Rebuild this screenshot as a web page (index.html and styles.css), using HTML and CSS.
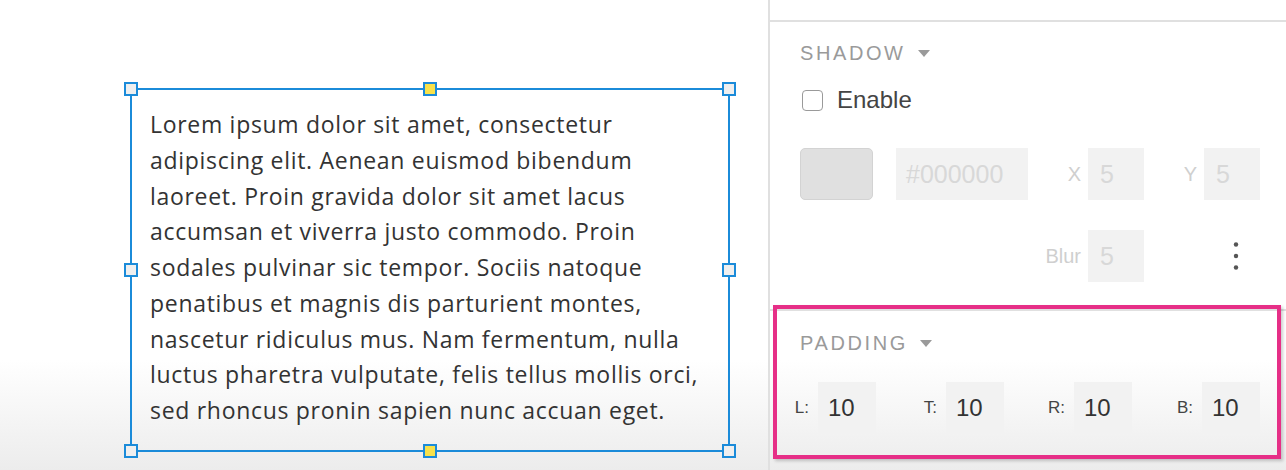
FILE: index.html
```html
<!DOCTYPE html>
<html lang="en">

<head>
    <meta charset="UTF-8">
    <meta name="viewport" content="width=device-width, initial-scale=1.0">
    <title>Text Block Editor</title>
    <link rel="stylesheet" href="styles.css">
</head>

<body>

    <!-- Canvas with the selected text block -->
    <div class="canvas">
        <div class="text-block">
            <p class="text-body">
                Lorem ipsum dolor sit amet, consectetur<br>
                adipiscing elit. Aenean euismod bibendum<br>
                laoreet. Proin gravida dolor sit amet lacus<br>
                accumsan et viverra justo commodo. Proin<br>
                sodales pulvinar sic tempor. Sociis natoque<br>
                penatibus et magnis dis parturient montes,<br>
                nascetur ridiculus mus. Nam fermentum, nulla<br>
                luctus pharetra vulputate, felis tellus mollis orci,<br>
                sed rhoncus pronin sapien nunc accuan eget.
            </p>

            <span class="handle top-left"></span>
            <span class="handle top-mid anchor"></span>
            <span class="handle top-right"></span>
            <span class="handle mid-left"></span>
            <span class="handle mid-right"></span>
            <span class="handle bottom-left"></span>
            <span class="handle bottom-mid anchor"></span>
            <span class="handle bottom-right"></span>
        </div>
    </div>

    <!-- Properties panel -->
    <aside class="panel">
        <div class="panel-top"></div>

        <section class="section shadow-section">
            <div class="section-title">SHADOW <span class="caret"></span></div>

            <label class="enable-row">
                <span class="checkbox"></span>
                Enable
            </label>

            <div class="shadow-grid">
                <div class="swatch"></div>
                <div class="field hex-field">#000000</div>
                <div class="field-group">
                    <span class="field-label">X</span>
                    <div class="field small-field">5</div>
                </div>
                <div class="field-group">
                    <span class="field-label">Y</span>
                    <div class="field small-field">5</div>
                </div>

                <div class="field-group blur-group">
                    <span class="field-label">Blur</span>
                    <div class="field small-field">5</div>
                </div>
                <div class="more-btn">
                    <svg width="6" height="30" viewBox="0 0 6 30">
                        <circle cx="3" cy="3.5" r="2.2" fill="#555" />
                        <circle cx="3" cy="15" r="2.2" fill="#555" />
                        <circle cx="3" cy="26.5" r="2.2" fill="#555" />
                    </svg>
                </div>
            </div>
        </section>

        <section class="section padding-section">
            <div class="highlight"></div>
            <div class="section-title">PADDING <span class="caret"></span></div>

            <div class="padding-row">
                <div class="pad-group">
                    <span class="pad-label">L:</span>
                    <div class="field pad-field">10</div>
                </div>
                <div class="pad-group">
                    <span class="pad-label">T:</span>
                    <div class="field pad-field">10</div>
                </div>
                <div class="pad-group">
                    <span class="pad-label">R:</span>
                    <div class="field pad-field">10</div>
                </div>
                <div class="pad-group">
                    <span class="pad-label">B:</span>
                    <div class="field pad-field">10</div>
                </div>
            </div>
        </section>
    </aside>

</body>

</html>
```

FILE: styles.css
```css
* {
    margin: 0;
    padding: 0;
    box-sizing: border-box;
}

body {
    font-family: 'Liberation Sans', Arial, sans-serif;
    height: 470px;
    overflow: hidden;
    display: flex;
    background: linear-gradient(to bottom, #fff 0, #fff 360px, #ececec 470px);
}

/* ---------- canvas ---------- */

.canvas {
    width: 768px;
    padding: 88px 0 0 130px;
}

.text-block {
    position: relative;
    width: 600px;
    height: 364px;
    border: 2px solid #1b8bd9;
    padding: 17px 18px 0 18px;
}

.text-body {
    font-family: 'Open Sans', 'Noto Sans', sans-serif;
    font-size: 23px;
    letter-spacing: 0.7px;
    line-height: 35.75px;
    color: #333;
    white-space: nowrap;
}

.handle {
    position: absolute;
    width: 14px;
    height: 14px;
    border: 2px solid #1b8bd9;
    background: #efefef;
}

.handle.anchor {
    background: #f7e14a;
}

.top-left { top: -8px; left: -8px; }
.top-mid { top: -8px; left: 291px; }
.top-right { top: -8px; right: -8px; }
.mid-left { top: 173px; left: -8px; }
.mid-right { top: 173px; right: -8px; }
.bottom-left { bottom: -8px; left: -8px; }
.bottom-mid { bottom: -8px; left: 291px; }
.bottom-right { bottom: -8px; right: -8px; }

/* ---------- panel ---------- */

.panel {
    width: 518px;
    border-left: 2px solid #e0e0e0;
}

.panel-top {
    height: 22px;
    border-bottom: 2px solid #e0e0e0;
}

.section {
    position: relative;
    padding: 0 26px 0 30px;
}

.section-title {
    display: flex;
    align-items: center;
    height: 24px;
    font-size: 20px;
    letter-spacing: 2.6px;
    color: #9a9a9a;
}

.caret {
    width: 0;
    height: 0;
    margin-left: 12px;
    border-left: 6px solid transparent;
    border-right: 6px solid transparent;
    border-top: 7px solid #9a9a9a;
}

.shadow-section {
    padding-top: 19px;
    padding-bottom: 27px;
    border-bottom: 2px solid #e0e0e0;
}

.enable-row {
    display: flex;
    align-items: center;
    height: 24px;
    margin-top: 23px;
    font-size: 24px;
    color: #444;
}

.checkbox {
    width: 21px;
    height: 21px;
    margin: 0 14px 0 2px;
    border: 1.5px solid #9a9a9a;
    border-radius: 4px;
}

.shadow-grid {
    display: grid;
    grid-template-columns: 96px 132px 1fr 1fr;
    grid-template-rows: 52px 52px;
    row-gap: 30px;
    margin-top: 36px;
}

.swatch {
    width: 73px;
    height: 52px;
    background: #e0e0e0;
    border: 1.5px solid #d3d3d3;
    border-radius: 5px;
}

.field {
    display: flex;
    align-items: center;
    height: 52px;
    background: #f2f2f2;
}

.hex-field {
    padding-left: 10px;
    font-size: 25px;
    color: #d8d8d8;
}

.field-group {
    display: flex;
    align-items: center;
    justify-content: flex-end;
    gap: 7px;
}

.field-label {
    font-size: 20px;
    color: #cfcfcf;
}

.small-field {
    width: 56px;
    padding-left: 12px;
    font-size: 25px;
    color: #d8d8d8;
}

.blur-group {
    grid-column: 3;
}

.more-btn {
    display: flex;
    align-items: center;
    justify-content: flex-end;
    padding-right: 21px;
}

/* ---------- padding section ---------- */

.padding-section {
    padding-top: 20px;
    height: 159px;
}

.highlight {
    position: absolute;
    top: -6px;
    left: 3px;
    right: 5px;
    height: 154px;
    border: 4px solid #e62f87;
    box-shadow: 2px 2px 3px rgba(0, 0, 0, 0.2);
}

.padding-row {
    display: flex;
    justify-content: space-between;
    margin: 27px 0 0 -10px;
}

.pad-group {
    display: flex;
    align-items: center;
    gap: 9px;
}

.pad-label {
    width: 19px;
    text-align: right;
    font-size: 17px;
    color: #444;
}

.pad-field {
    width: 58px;
    padding-left: 10px;
    font-size: 24px;
    color: #333;
}
```
